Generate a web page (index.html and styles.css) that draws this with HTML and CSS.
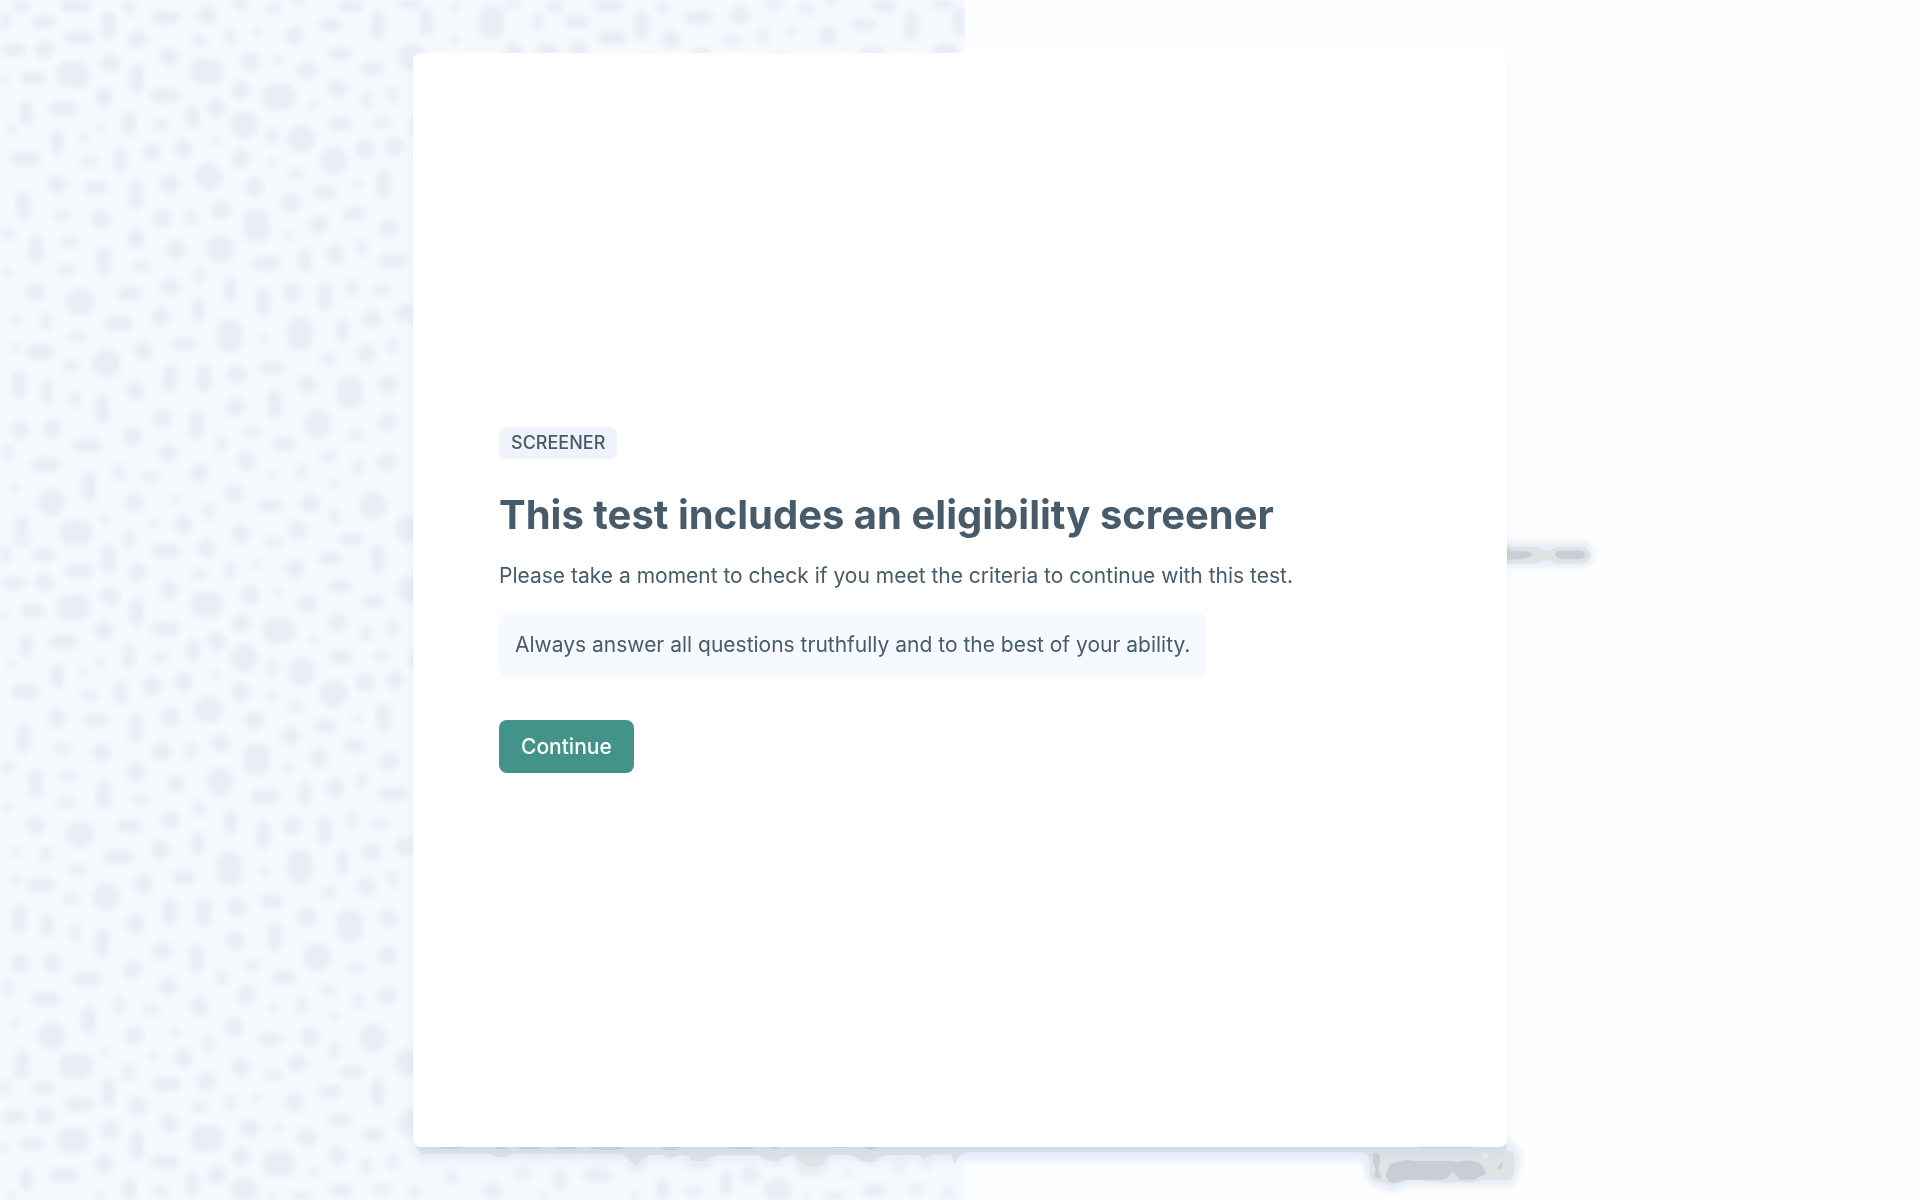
FILE: index.html
```html
<!DOCTYPE html>
<html lang="en">
<head>
    <meta charset="UTF-8">
    <meta name="viewport" content="width=device-width, initial-scale=1.0">
    <title>Screener</title>
    <link rel="stylesheet" href="styles.css">
</head>
<body>

<svg class="backdrop" aria-hidden="true">
    <defs>
        <pattern id="terrazzo" width="1600" height="1600" patternUnits="userSpaceOnUse" patternTransform="scale(0.3333)"></pattern>
        <filter id="soften" x="0" y="0" width="100%" height="100%"><feGaussianBlur stdDeviation="3.4"/></filter>
    </defs>
    <rect width="100%" height="100%" fill="url(#terrazzo)" filter="url(#soften)"/>
</svg>

<main class="stage">
    <!-- smudges that show from under the card -->
    <svg class="smudge smudge-bottom" viewBox="0 0 960 40" aria-hidden="true">
        <path class="halo" d="M2 0L5 16H950V0Z" opacity="0.7"/>
        <path class="grey" d="M3 0L10 7H78Q88 14 98 7H208Q214 9 217 15L224 19L230 12Q234 7 250 8Q258 13 267 8L276 9L279 14H294Q298 8 308 8H346Q352 15 365 14Q373 8 382 9Q388 20 400 20Q413 19 415 9Q427 6 441 9Q448 16 460 15Q467 10 473 8L505 8L511 12L518 8L538 7L541 17L546 10Q550 5 558 5H960V0Z"/>
        <g class="dark">
            <path d="M23 0H52Q38 4 23 0ZM80 0H96Q88 5 80 0ZM101 0H132Q116 5 101 0ZM140 0H167Q153 5 140 0ZM174 0H213Q206 4 193 3Q181 3 174 0Z"/>
            <path d="M247 0H268Q258 7 247 0ZM310 0H345Q328 5 310 0ZM356 0H368Q362 3 356 0ZM419 0H435Q427 2 419 0ZM450 0H467Q458 6 450 0Z"/>
        </g>
    </svg>
    <svg class="smudge smudge-corner" viewBox="0 80 600 120" aria-hidden="true">
        <path class="halo" d="M60 80L80 180Q100 208 160 214L220 200H510Q546 180 545 95L500 50V80Z"/>
        <path class="grey" d="M40 70V96H70Q84 100 88 120L90 168Q100 188 130 188Q160 202 190 184L225 178L290 186H400L440 178H505Q524 176 523 145V105Q520 92 500 90V70Z"/>
        <path class="dark" d="M98 102Q108 92 119 104L120 125L115 148L125 168L118 175L102 170L107 148L98 120ZM136 168L150 130L165 127Q200 115 225 122H335L352 126Q390 112 418 128Q438 145 437 162Q420 166 405 178H360L338 154Q325 175 305 178H192Q170 192 148 184ZM230 80H402Q390 85 370 84H250Z"/>
        <path class="dark" d="M471 140L490 125L486 143L474 148Z"/>
        <circle cx="435" cy="106" r="8" fill="#eceff1"/>
    </svg>
    <svg class="smudge smudge-side" viewBox="80 0 339 210" aria-hidden="true">
        <path class="halo" d="M80 62H300Q345 64 342 108Q342 138 305 142H80Z"/>
        <path class="grey" d="M80 68L92 80H160L200 92L238 80H300Q330 82 330 105Q330 130 300 130H230L200 118L170 130H100L80 133Z"/>
        <path class="dark" d="M80 84L95 92L148 95Q162 103 150 110Q130 120 80 118ZM238 92H300Q314 94 314 104Q314 116 295 117H240Q224 110 225 101Q227 93 238 92Z"/>
    </svg>

    <div class="card">
        <span class="badge">SCREENER</span>
        <h1>This test includes an eligibility screener</h1>
        <p class="intro">Please take a moment to check if you meet the criteria to continue with this test.</p>
        <p class="note">Always answer all questions truthfully and to the best of your ability.</p>
        <button type="button" class="continue">Continue</button>
    </div>
</main>

<script src="script.js"></script>
</body>
</html>
```
FILE: styles.css
```css
* { box-sizing: border-box; }
body {
    margin: 0;
    background-color: #fefefe;
    color: #475b6b;
    font-family: Inter, "Liberation Sans", sans-serif;
}
.backdrop {
    position: fixed;
    top: 0;
    left: 0;
    width: calc(50% + 5px);
    height: 100%;
    background-color: #f5fafe;
}
.stage {
    position: relative;
    z-index: 0;
    max-width: 1094px;
    margin: 53px auto;
}
.card {
    display: flex;
    flex-direction: column;
    align-items: flex-start;
    justify-content: center;
    min-height: calc(100vh - 106px);
    padding: 48px 86px;
    border-radius: 8px;
    background-color: #fff;
    box-shadow: 0 8px 8px rgba(190, 210, 235, 0.3);
}
.badge {
    padding: 0 12px;
    border-radius: 8px;
    background-color: #f0f3fb;
    font-size: 18px;
    font-weight: 500;
    line-height: 32px;
}
h1 {
    margin: 32px 0 0;
    font-size: 40px;
    font-weight: 700;
    line-height: 48px;
}
p {
    margin: 0;
    font-size: 21px;
    line-height: 32px;
}
.intro { margin-top: 21px; }
.note {
    margin-top: 21px;
    padding: 16px;
    border-radius: 8px;
    background-color: #f6f9fe;
}
.continue {
    margin-top: 43px;
    padding: 0 22px;
    border: none;
    border-radius: 8px;
    background-color: #43938a;
    color: #fff;
    font-family: inherit;
    font-size: 21px;
    font-weight: 500;
    line-height: 53px;
    cursor: pointer;
}
.continue:hover { background-color: #377c74; }

/* terrazzo shapes */
.chip { fill: #e8edf6; }
.chip-faint { fill: #ebf0f7; }

/* smudges behind the card */
.smudge { position: absolute; z-index: -1; overflow: visible; }
.smudge-bottom { top: 100%; left: 0; width: 960px; height: 40px; }
.smudge-corner { top: 100%; right: -33px; width: 200px; height: 40px; }
.smudge-side { top: 467px; left: 100%; width: 113px; height: 70px; }
.halo { fill: #e9eff9; filter: blur(3px); }
.smudge-corner .halo, .smudge-side .halo { filter: blur(8px); }
.grey { fill: #dfe3e6; }
.dark { fill: #c9ced6; }
```
FILE: script.js
```js
// Each kind: width, height, corner radius, class. Positions are x, y pairs in a 1600 unit tile.
const kinds = [
    { w: 84, h: 84, r: 42, cls: 'chip', at: [733,375, 904,416, 1001,482, 625,529, 660,746, 240,905, 319,1090, 1235,170, 952,1272, 154,1508, 1120,1516, 1228,1588] },
    { w: 96, h: 76, r: 26, cls: 'chip', at: [220,223, 620,215, 836,291, 228,1598] },
    { w: 76, h: 96, r: 26, cls: 'chip', at: [770,678, 689,1007, 900,1000, 1050,1178, 1475,65] },
    { w: 58, h: 58, r: 29, cls: 'chip', at: [620,45, 413,118, 134,147, 507,170, 884,107, 750,185, 331,190, 921,212, 312,292, 722,271, 1013,267, 650,325, 456,457, 551,447, 722,475, 1097,447, 1184,440, 171,553, 510,552, 763,561, 872,608, 304,658, 486,655, 663,630, 958,674, 1168,685, 408,717, 528,751, 1006,763, 107,876, 510,860, 877,878, 1115,957, 1215,940, 481,951, 430,1053, 1099,1060, 711,1123, 921,1153, 1165,1155, 406,1172, 706,1222, 487,1254, 60,1291, 157,1288, 397,1310, 1163,1267, 504,1360, 739,1384, 598,1420, 1160,1387, 702,1482, 403,1508, 931,1511, 550,1575, 722,1602, 893,1590, 1539,155, 1479,375] },
    { w: 88, h: 42, r: 21, cls: 'chip', at: [497,53, 237,113, 495,287, 191,326, 77,476, 797,791, 355,971, 121,1056, 1180,783, 262,1337, 135,1396] },
    { w: 42, h: 88, r: 21, cls: 'chip', at: [325,77, 411,237, 1134,77, 407,585, 70,617, 1151,553, 108,751, 311,784, 788,906, 975,890, 511,1137, 612,1137, 57,1155, 306,1228, 590,1275, 824,1213, 267,1460, 66,1592, 1280,65] },
    { w: 70, h: 38, r: 16, cls: 'chip', at: [130,65, 43,150, 98,233, 990,75, 1054,18, 1019,160, 1120,205, 1023,372, 287,562, 976,577, 1063,640, 387,880, 551,1032, 815,1104, 851,1332, 812,1518] },
    { w: 38, h: 70, r: 16, cls: 'chip', at: [80,338, 387,370, 172,428, 362,478, 578,350, 691,868, 593,930, 915,780, 1026,990, 140,1177] },
    { w: 56, h: 38, r: 19, cls: 'chip-faint', at: [482,373, 268,485, 187,646, 207,727, 198,809, 425,799, 888,520, 820,27, 598,122, 1147,368, 233,1010, 213,1097, 1143,870, 986,1077, 20,702, 452,1430, 756,1297, 1068,1305, 986,1371, 65,20, 1541,10, 1567,320] },
    { w: 38, h: 56, r: 19, cls: 'chip-faint', at: [387,20, 690,109, 818,408, 1098,300, 1180,285, 573,652, 1086,742, 1055,862, 597,825, 137,964, 1180,1037, 224,1198, 357,1418, 22,1361, 664,1332, 904,1416, 1074,1403, 626,1533, 1002,1550, 387,1615, 14,65, 1355,330, 1244,380] },
    { w: 30, h: 32, r: 15, cls: 'chip-faint', at: [773,95, 834,182, 941,317, 303,387, 250,414, 643,424, 818,488, 1073,554, 865,706, 33,390, 48,958, 48,1043, 795,1016, 13,243, 43,1468, 526,1498, 316,1557, 462,1568, 821,1424, 1002,1450, 22,820, 1364,20, 1364,120] }
];

const tile = document.getElementById('terrazzo');

function addChip(kind, x, y) {
    const chip = document.createElementNS('http://www.w3.org/2000/svg', 'rect');
    chip.setAttribute('x', x - kind.w / 2);
    chip.setAttribute('y', y - kind.h / 2);
    chip.setAttribute('width', kind.w);
    chip.setAttribute('height', kind.h);
    chip.setAttribute('rx', kind.r);
    chip.setAttribute('class', kind.cls);
    tile.appendChild(chip);
}

kinds.forEach(kind => {
    for (let i = 0; i < kind.at.length; i += 2) {
        const x = kind.at[i];
        const y = kind.at[i + 1];
        addChip(kind, x, y);
        // repeat chips that cross the tile edge on the other side
        if (y > 1550) addChip(kind, x, y - 1600);
        if (y < 50) addChip(kind, x, y + 1600);
        if (x < 50) addChip(kind, x + 1600, y);
    }
});
```
